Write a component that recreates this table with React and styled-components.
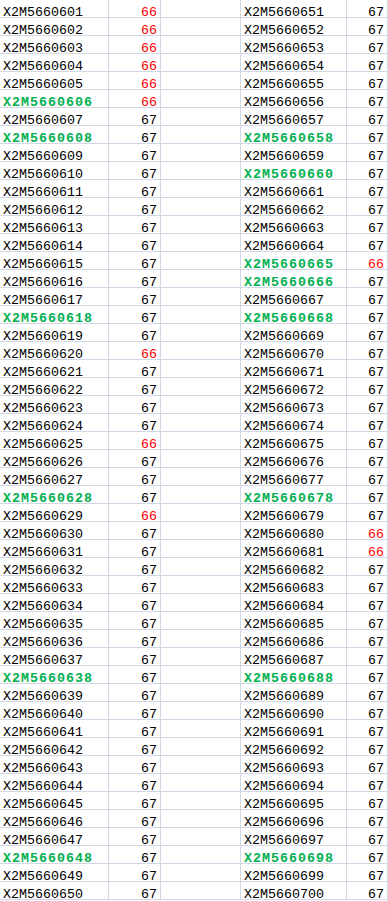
import React from 'react';
import styled, { createGlobalStyle } from 'styled-components';

const GlobalStyle = createGlobalStyle`
  html, body {
    margin: 0;
    padding: 0;
    background: #ffffff;
  }
`;

const Sheet = styled.div`
  display: grid;
  grid-template-columns: 109px 52px 80px 106px 41px;
  grid-auto-rows: 18px;
  width: 388px;
  font-family: "Liberation Mono", "DejaVu Sans Mono", monospace;
  font-size: 13.33px;
  color: #000000;
`;

const Cell = styled.div`
  box-sizing: border-box;
  height: 18px;
  border-right: 1px solid #d0d7e5;
  border-bottom: 1px solid #d0d7e5;
  padding: 8px ${(p) => (p.$num ? '3px' : '0')} 0 ${(p) => (p.$num ? '0' : '3px')};
  line-height: 9px;
  white-space: nowrap;
  text-align: ${(p) => (p.$num ? 'right' : 'left')};
  color: ${(p) => (p.$tone === 'red' ? '#ff0000' : p.$tone === 'green' ? '#00b050' : '#000000')};
  font-weight: ${(p) => (p.$tone === 'green' ? 'bold' : 'normal')};
  letter-spacing: ${(p) => (p.$tone === 'green' ? '1px' : '0')};
`;

// ids that are marked in bold green
const greens = [606, 608, 618, 628, 638, 648, 658, 660, 665, 666, 668, 678, 688, 698];
// ids whose value is 66 (red)
const reds = [601, 602, 603, 604, 605, 606, 620, 625, 629, 665, 680, 681];

const row = (n) => ({
  id: 'X2M5660' + String(n).padStart(3, '0'),
  green: greens.includes(n),
  value: reds.includes(n) ? 66 : 67,
  red: reds.includes(n),
});

const rows = Array.from({ length: 50 }, (_, i) => [row(601 + i), row(651 + i)]);

const App = () => (
  <>
    <GlobalStyle />
    <Sheet>
      {rows.map(([left, right]) => (
        <React.Fragment key={left.id}>
          <Cell $tone={left.green ? 'green' : undefined}>{left.id}</Cell>
          <Cell $num $tone={left.red ? 'red' : undefined}>{left.value}</Cell>
          <Cell />
          <Cell $tone={right.green ? 'green' : undefined}>{right.id}</Cell>
          <Cell $num $tone={right.red ? 'red' : undefined}>{right.value}</Cell>
        </React.Fragment>
      ))}
    </Sheet>
  </>
);

export default App;
